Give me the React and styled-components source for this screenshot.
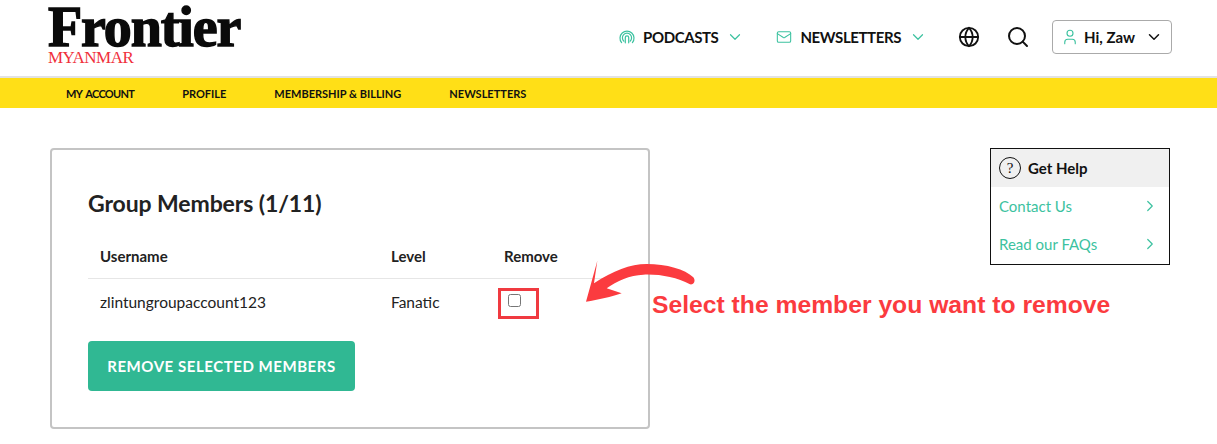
import React from 'react'
import styled, { createGlobalStyle } from 'styled-components'
import { Globe, Search, User, ChevronDown, ChevronRight, Mail } from 'lucide-react'

const GlobalStyle = createGlobalStyle`
  html, body { margin: 0; padding: 0; background: #fff; }
  body { font-family: "Lato", "Noto Sans", sans-serif; color: #222; overflow: hidden; }
`

const Page = styled.div`
  position: relative;
  width: 1217px;
  height: 444px;
  overflow: hidden;
`

const Header = styled.header`
  height: 76px;
  display: flex;
  align-items: flex-start;
  justify-content: space-between;
  padding: 0 45px 0 48px;
  border-bottom: 2px solid #e2e2e2;
`

const Logo = styled.div`
  display: flex;
  flex-direction: column;
  font-family: "Liberation Serif", serif;
`

const LogoMain = styled.div`
  font-weight: 700;
  font-size: 56px;
  line-height: 50px;
  height: 48px;
  margin-top: 2px;
  letter-spacing: -1.1px;
  color: #0a0a0a;
  -webkit-text-stroke: 1.4px #0a0a0a;
`

const LogoSub = styled.div`
  font-size: 17px;
  line-height: 16px;
  letter-spacing: -0.5px;
  color: #f0303c;
`

const HeaderRight = styled.div`
  display: flex;
  align-items: center;
  height: 34px;
  margin-top: 20px;
`

const NavItem = styled.div`
  display: flex;
  align-items: center;
  gap: 8px;
  margin-right: ${(p) => p.$mr}px;
  font-weight: 700;
  font-size: 15px;
  letter-spacing: -0.4px;
  color: #111;
  svg { flex: none; }
`

const IconButton = styled.div`
  display: flex;
  margin-right: ${(p) => p.$mr}px;
  color: #111;
`

const UserButton = styled.div`
  width: 120px;
  height: 34px;
  box-sizing: border-box;
  display: flex;
  align-items: center;
  padding: 0 8px;
  border: 1px solid #aaa;
  border-radius: 4px;
  font-weight: 700;
  font-size: 15px;
  color: #111;
`

const UserName = styled.span`
  margin: 0 auto 0 5px;
`

const SubNav = styled.nav`
  height: 30px;
  background: #ffdf17;
  display: flex;
  align-items: center;
  gap: 48px;
  padding-left: 66px;
`

const SubNavLink = styled.a`
  font-weight: 700;
  font-size: 11px;
  letter-spacing: ${(p) => (p.$tight ? '-0.7px' : '0')};
  word-spacing: ${(p) => (p.$tight ? '2px' : '0')};
  color: #111;
`

const Main = styled.main`
  display: flex;
  justify-content: space-between;
  align-items: flex-start;
  padding: 40px 47px 0 50px;
`

const Card = styled.section`
  width: 600px;
  height: 281px;
  box-sizing: border-box;
  padding: 39px 36px 0;
  border: 2px solid #c4c4c4;
  border-radius: 4px;
`

const Title = styled.h2`
  margin: 0 0 16px;
  font-size: 23px;
  line-height: 28px;
  font-weight: 700;
  letter-spacing: -0.1px;
  color: #222;
`

const Table = styled.table`
  width: 524px;
  border-collapse: collapse;
  table-layout: fixed;
`

const Th = styled.th`
  width: ${(p) => p.$w}px;
  height: 45px;
  padding: 2px 0 0 12px;
  box-sizing: border-box;
  text-align: left;
  font-size: 15px;
  font-weight: 700;
  color: #222;
  border-bottom: 1px solid #e6e6e6;
`

const Td = styled.td`
  height: 46px;
  padding: 0 0 0 12px;
  font-size: 15.5px;
  color: #222;
`

const CheckboxFrame = styled.span`
  display: inline-block;
  width: 41px;
  height: 31px;
  box-sizing: border-box;
  margin: 6px 0 0 -6px;
  padding: 3px 0 0 7px;
  border: 3px solid #f03a40;
`

const Checkbox = styled.span`
  display: block;
  width: 13px;
  height: 13px;
  box-sizing: border-box;
  border: 1px solid #767676;
  border-radius: 2.5px;
  background: #fff;
`

const Button = styled.button`
  display: block;
  width: 267px;
  height: 50px;
  margin-top: 16px;
  border: 0;
  border-radius: 4px;
  background: #30b893;
  color: #fff;
  font-family: inherit;
  font-weight: 700;
  font-size: 15px;
  letter-spacing: 0.55px;
`

const HelpBox = styled.aside`
  width: 180px;
  height: 117px;
  box-sizing: border-box;
  border: 1px solid #111;
`

const HelpHead = styled.div`
  height: 38px;
  display: flex;
  align-items: center;
  gap: 7px;
  padding-left: 8px;
  background: #f0f0f0;
  font-weight: 700;
  font-size: 15px;
  color: #111;
`

const QuestionMark = styled.span`
  width: 22px;
  height: 22px;
  box-sizing: border-box;
  display: flex;
  align-items: center;
  justify-content: center;
  border: 1px solid #111;
  border-radius: 50%;
  font-family: "Liberation Serif", serif;
  font-weight: 400;
  font-size: 15px;
`

const HelpLink = styled.a`
  height: 38px;
  display: flex;
  align-items: center;
  justify-content: space-between;
  padding: 0 10px 0 8px;
  font-size: 15px;
  color: #3cc2a0;
`

const Arrow = styled.svg`
  position: absolute;
  left: 490px;
  top: 250px;
  width: 240px;
  height: 90px;
`

const Annotation = styled.div`
  position: absolute;
  left: 652px;
  top: 290px;
  font-family: "Liberation Sans", sans-serif;
  font-weight: 700;
  font-size: 24.7px;
  line-height: 30px;
  color: #fb3b3f;
  white-space: nowrap;
`

const PodcastIcon = () => (
  <svg width="16" height="16" viewBox="0 0 16 16" fill="none" stroke="#3cc2a0" strokeWidth="1.2" strokeLinecap="round">
    <path d="M2.6 13.6A7 7 0 1 1 13.4 13.6" />
    <path d="M4.9 12.2A4.6 4.6 0 1 1 11.1 12.2" />
    <path d="M6.3 13.8V8.6A1.7 1.7 0 0 1 9.7 8.6V13.8" />
  </svg>
)

export default function App() {
  return (
    <Page>
      <GlobalStyle />
      <Header>
        <Logo>
          <LogoMain>Frontier</LogoMain>
          <LogoSub>MYANMAR</LogoSub>
        </Logo>
        <HeaderRight>
          <NavItem $mr={32}>
            <PodcastIcon />
            PODCASTS
            <ChevronDown size={18} color="#3cc2a0" strokeWidth={1.6} />
          </NavItem>
          <NavItem $mr={31}>
            <Mail size={16} color="#3cc2a0" strokeWidth={1.6} />
            NEWSLETTERS
            <ChevronDown size={18} color="#3cc2a0" strokeWidth={1.6} />
          </NavItem>
          <IconButton $mr={26}>
            <Globe size={22} strokeWidth={2} />
          </IconButton>
          <IconButton $mr={22}>
            <Search size={24} strokeWidth={2} />
          </IconButton>
          <UserButton>
            <User size={18} color="#3cc2a0" strokeWidth={1.5} />
            <UserName>Hi, Zaw</UserName>
            <ChevronDown size={18} strokeWidth={2} />
          </UserButton>
        </HeaderRight>
      </Header>
      <SubNav>
        <SubNavLink $tight>MY ACCOUNT</SubNavLink>
        <SubNavLink>PROFILE</SubNavLink>
        <SubNavLink>MEMBERSHIP &amp; BILLING</SubNavLink>
        <SubNavLink>NEWSLETTERS</SubNavLink>
      </SubNav>
      <Main>
        <Card>
          <Title>Group Members (1/11)</Title>
          <Table>
            <thead>
              <tr>
                <Th $w={291}>Username</Th>
                <Th $w={113}>Level</Th>
                <Th $w={120}>Remove</Th>
              </tr>
            </thead>
            <tbody>
              <tr>
                <Td>zlintungroupaccount123</Td>
                <Td>Fanatic</Td>
                <Td>
                  <CheckboxFrame>
                    <Checkbox />
                  </CheckboxFrame>
                </Td>
              </tr>
            </tbody>
          </Table>
          <Button>REMOVE SELECTED MEMBERS</Button>
        </Card>
        <HelpBox>
          <HelpHead>
            <QuestionMark>?</QuestionMark>
            Get Help
          </HelpHead>
          <HelpLink>
            Contact Us
            <ChevronRight size={18} strokeWidth={1.6} />
          </HelpLink>
          <HelpLink>
            Read our FAQs
            <ChevronRight size={18} strokeWidth={1.6} />
          </HelpLink>
        </HelpBox>
      </Main>
      <Arrow viewBox="0 0 720 270">
        <path
          fill="#fb3b3f"
          d="M288 155 L322 32 L312 100 C370 62 420 42 470 42 C530 42 585 58 610 82 C618 92 612 105 600 103 C560 82 510 72 460 74 C420 76 380 92 350 115 L395 130 C365 140 325 150 288 155 Z"
        />
      </Arrow>
      <Annotation>Select the member you want to remove</Annotation>
    </Page>
  )
}
